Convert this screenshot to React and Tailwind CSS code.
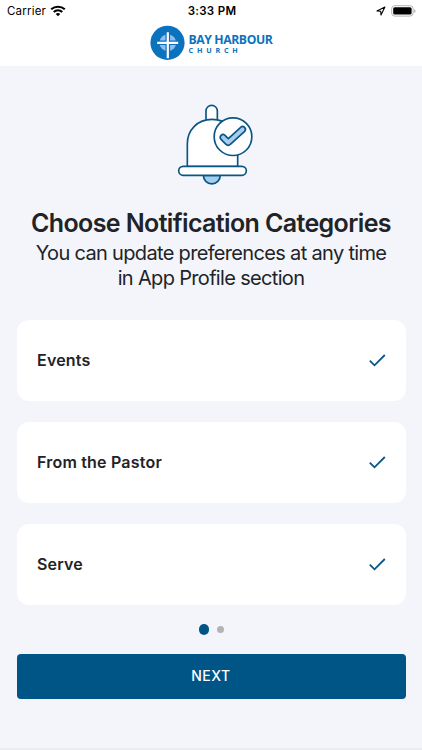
import { useState } from 'react';

const categories = [
  { id: 'events', name: 'Events' },
  { id: 'pastor', name: 'From the Pastor' },
  { id: 'serve', name: 'Serve' }
];

function StatusBar() {
  return (
    <div className="grid h-[22px] grid-cols-3 items-center pl-[7px] pr-[5px] text-black">
      <div className="flex items-center gap-1">
        <span className="text-[11.5px] leading-[22px] tracking-[0.2px]">Carrier</span>
        <svg className="-mt-px" width="16" height="12" viewBox="0 0 16 12" fill="none" stroke="currentColor">
          <path d="M1.2 4.3C5 .8 11 .8 14.8 4.3" strokeWidth="2.1" />
          <path d="M3.7 7C6.2 4.8 9.8 4.8 12.3 7" strokeWidth="2" />
          <path d="M8 11.3 5.7 9c1.3-1.2 3.3-1.2 4.6 0z" fill="currentColor" stroke="none" />
        </svg>
      </div>
      <span className="text-center text-[11.5px] font-semibold leading-[22px] tracking-[0.3px]">3:33 PM</span>
      <div className="flex items-center justify-end gap-[5px]">
        <svg width="10" height="10" viewBox="0 0 10 10" fill="none" stroke="currentColor" strokeLinejoin="round">
          <path d="M8.9 1 1 4.9l3.7.3.3 3.8z" strokeWidth="1.1" />
        </svg>
        <svg className="-mt-px" width="26" height="12" viewBox="0 0 26 12">
          <rect x="0.7" y="0.7" width="21.4" height="10.4" rx="3" fill="#fff" stroke="#b3b3b3" />
          <rect x="2.2" y="2.2" width="18.4" height="7.4" rx="1.6" fill="#000" />
          <path d="M23.4 4.2v3.6c1.4-.5 1.4-3.1 0-3.6" fill="#999" />
        </svg>
      </div>
    </div>
  );
}

function Logo() {
  return (
    <div className="flex h-11 items-start justify-center pt-[3px]">
      <svg className="mr-1" width="35" height="35" viewBox="0 0 35 35">
        <circle cx="17.5" cy="17.8" r="17.1" fill="#0b72bd" />
        <circle cx="17.8" cy="17.8" r="8.4" fill="#8fbdf0" />
        <path d="M17.8 8v20M8 17.8h20" stroke="#0b72bd" strokeWidth="4.6" />
        <path d="M17.8 7.2v26M7.2 17.8h21" stroke="#fff" strokeWidth="2.2" />
      </svg>
      <div className="w-[84px] whitespace-nowrap pt-[8px] font-['Open_Sans',sans-serif] font-bold text-[#0b72bd]">
        <div className="text-[12.2px] leading-[14px] tracking-[-0.4px]">BAY HARBOUR</div>
        <div className="text-[7.2px] leading-[7px] tracking-[3.8px]">CHURCH</div>
      </div>
    </div>
  );
}

function BellIcon() {
  return (
    <svg width="84" height="83" viewBox="12 24 252 249" fill="#fff" stroke="#0b5585" strokeWidth="5">
      <path d="M123 80V48a17 17 0 0 1 34 0v32" />
      <path d="M67 215v-68c0-43 31-74 74-74s77 31 77 74v68z" />
      <path d="M115 241a25.500 25.500 0 0 0 51 0z" fill="#a5cdee" />
      <rect x="41" y="214" width="203" height="27" rx="13.500" />
      <circle cx="204" cy="125" r="56.500" />
      <path
        d="M180 121a8.500 8.500 0 0 0-12 12l15 15a8.500 8.500 0 0 0 13 0l43-39a8.500 8.500 0 0 0-12-12l-37 34z"
        fill="#a5cdee"
        strokeLinejoin="round"
      />
    </svg>
  );
}

function CategoryCard({ name, checked, onToggle }) {
  return (
    <button
      type="button"
      onClick={onToggle}
      className="flex h-[81px] w-full items-center justify-between rounded-xl bg-white pb-px pl-[20.500px] pr-5 text-left"
    >
      <span className="-mt-px text-[16px] font-semibold tracking-[0.2px] text-[#212327]">{name}</span>
      {checked && (
        <svg width="17" height="13" viewBox="0 0 17 13" fill="none" stroke="#0b5585" strokeWidth="1.8">
          <path d="M.8 6.600l4.700 4.700L15.800 1" />
        </svg>
      )}
    </button>
  );
}

export default function App() {
  const [selected, setSelected] = useState(['events', 'pastor', 'serve']);

  const toggle = (id) => {
    setSelected((prev) => (prev.includes(id) ? prev.filter((item) => item !== id) : [...prev, id]));
  };

  return (
    <div className="flex h-[750px] w-[422px] flex-col overflow-hidden bg-[#f4f5fa] font-['Inter',sans-serif]">
      <header className="h-[66px] shrink-0 bg-white">
        <StatusBar />
        <Logo />
      </header>

      <main className="flex flex-1 flex-col items-center px-[16.500px] pt-[37px]">
        <BellIcon />
        <h1 className="mt-[20px] whitespace-nowrap text-[25px] font-semibold leading-[34px] tracking-[-0.62px] text-[#212327]">
          Choose Notification Categories
        </h1>
        <p className="mt-[1px] whitespace-nowrap text-center text-[20px] leading-[24.500px] tracking-[-0.67px] text-[#212327]">
          You can update preferences at any time
          <br />
          in App Profile section
        </p>

        <div className="mt-[30px] flex w-full flex-col gap-[21px]">
          {categories.map((category) => (
            <CategoryCard
              key={category.id}
              name={category.name}
              checked={selected.includes(category.id)}
              onToggle={() => toggle(category.id)}
            />
          ))}
        </div>

        {/* Page dots */}
        <div className="mt-[19px] flex h-[11px] items-center gap-2">
          <span className="size-[10.500px] rounded-full bg-[#005587]" />
          <span className="size-[6.500px] rounded-full bg-[#b3b3b5]" />
        </div>

        <button
          type="button"
          className="mt-[19px] h-[44.500px] w-full rounded bg-[#005587] pb-px text-[14px] font-medium tracking-[0.5px] text-white"
        >
          NEXT
        </button>
      </main>

      <div className="h-[2px] shrink-0 bg-[#ebecf0]" />
    </div>
  );
}
